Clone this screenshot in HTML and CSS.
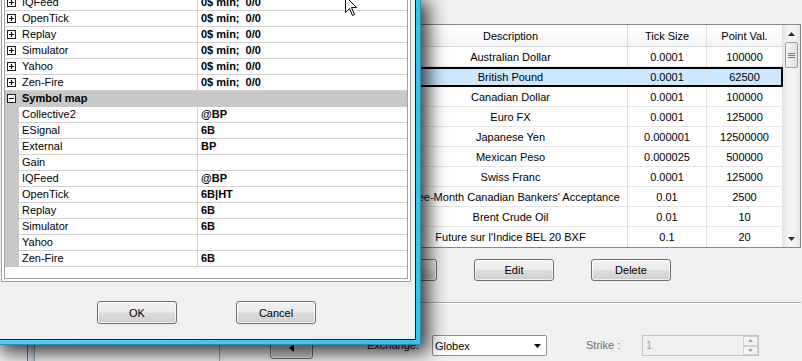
FILE: index.html
```html
<!DOCTYPE html>
<html>
<head>
<meta charset="utf-8">
<link rel="stylesheet" href="styles.css">
</head>
<body>
<div class="app">
  <div class="side"><div class="side-bar"></div></div>
  <div class="content">
    <div class="list">
      <div class="lv">
        <div class="lv-head">
          <div class="c-desc">Description</div>
          <div class="c-tick">Tick Size</div>
          <div class="c-pt">Point Val.</div>
        </div>
        <div class="lv-row"><div class="c-desc">Australian Dollar</div><div class="c-tick">0.0001</div><div class="c-pt">100000</div></div>
        <div class="lv-row sel"><div class="c-desc">British Pound</div><div class="c-tick">0.0001</div><div class="c-pt">62500</div></div>
        <div class="lv-row"><div class="c-desc">Canadian Dollar</div><div class="c-tick">0.0001</div><div class="c-pt">100000</div></div>
        <div class="lv-row"><div class="c-desc">Euro FX</div><div class="c-tick">0.0001</div><div class="c-pt">125000</div></div>
        <div class="lv-row"><div class="c-desc">Japanese Yen</div><div class="c-tick">0.000001</div><div class="c-pt">12500000</div></div>
        <div class="lv-row"><div class="c-desc">Mexican Peso</div><div class="c-tick">0.000025</div><div class="c-pt">500000</div></div>
        <div class="lv-row"><div class="c-desc">Swiss Franc</div><div class="c-tick">0.0001</div><div class="c-pt">125000</div></div>
        <div class="lv-row"><div class="c-desc">Three-Month Canadian Bankers' Acceptance</div><div class="c-tick">0.01</div><div class="c-pt">2500</div></div>
        <div class="lv-row"><div class="c-desc">Brent Crude Oil</div><div class="c-tick">0.01</div><div class="c-pt">10</div></div>
        <div class="lv-row last"><div class="c-desc">Future sur l'Indice BEL 20 BXF</div><div class="c-tick">0.1</div><div class="c-pt">20</div></div>
      </div>
      <div class="sb">
        <div class="sb-btn"><svg width="7" height="4" viewBox="0 0 7 4"><path d="M0 4 L3.5 0 L7 4 Z" fill="#303030"/></svg></div>
        <div class="sb-thumb"><span></span><span></span><span></span></div>
        <div class="sb-track"></div>
        <div class="sb-btn"><svg width="7" height="4" viewBox="0 0 7 4"><path d="M0 0 L3.5 4 L7 0 Z" fill="#303030"/></svg></div>
      </div>
    </div>
    <div class="btn-row">
      <div class="btn">Add</div>
      <div class="btn">Edit</div>
      <div class="btn">Delete</div>
    </div>
    <div class="sep"></div>
    <div class="bottom-row">
      <div class="btn nav-btn"><svg width="5" height="8" viewBox="0 0 5 8"><path d="M5 0 L0 4 L5 8 Z" fill="#000"/></svg></div>
      <div class="ex-label">Exchange:</div>
      <div class="combo"><span>Globex</span><svg class="combo-arrow" width="7" height="4" viewBox="0 0 7 4"><path d="M0 0 L3.5 4 L7 0 Z" fill="#000"/></svg></div>
      <div class="strike">Strike :</div>
      <div class="spin"><span>1</span>
        <div class="spin-btns">
          <div class="spin-b"><svg width="5" height="3" viewBox="0 0 5 3"><path d="M0 3 L2.5 0 L5 3 Z" fill="#a0a0a0"/></svg></div>
          <div class="spin-b"><svg width="5" height="3" viewBox="0 0 5 3"><path d="M0 0 L2.5 3 L5 0 Z" fill="#a0a0a0"/></svg></div>
        </div>
      </div>
    </div>
  </div>
</div>

<div class="dialog">
  <div class="client">
    <div class="pg-outer">
      <div class="pg-inner">
        <div class="pg-row exp"><span class="pg-gut"><svg width="9" height="9" viewBox="0 0 9 9"><rect x="0.5" y="0.5" width="8" height="8" fill="#fff" stroke="#222"/><path d="M2 4.5 H7 M4.5 2 V7" stroke="#000"/></svg></span><span class="pg-name">IQFeed</span><span class="pg-val">0$ min;&nbsp; 0/0</span></div>
        <div class="pg-row exp"><span class="pg-gut"><svg width="9" height="9" viewBox="0 0 9 9"><rect x="0.5" y="0.5" width="8" height="8" fill="#fff" stroke="#222"/><path d="M2 4.5 H7 M4.5 2 V7" stroke="#000"/></svg></span><span class="pg-name">OpenTick</span><span class="pg-val">0$ min;&nbsp; 0/0</span></div>
        <div class="pg-row exp"><span class="pg-gut"><svg width="9" height="9" viewBox="0 0 9 9"><rect x="0.5" y="0.5" width="8" height="8" fill="#fff" stroke="#222"/><path d="M2 4.5 H7 M4.5 2 V7" stroke="#000"/></svg></span><span class="pg-name">Replay</span><span class="pg-val">0$ min;&nbsp; 0/0</span></div>
        <div class="pg-row exp"><span class="pg-gut"><svg width="9" height="9" viewBox="0 0 9 9"><rect x="0.5" y="0.5" width="8" height="8" fill="#fff" stroke="#222"/><path d="M2 4.5 H7 M4.5 2 V7" stroke="#000"/></svg></span><span class="pg-name">Simulator</span><span class="pg-val">0$ min;&nbsp; 0/0</span></div>
        <div class="pg-row exp"><span class="pg-gut"><svg width="9" height="9" viewBox="0 0 9 9"><rect x="0.5" y="0.5" width="8" height="8" fill="#fff" stroke="#222"/><path d="M2 4.5 H7 M4.5 2 V7" stroke="#000"/></svg></span><span class="pg-name">Yahoo</span><span class="pg-val">0$ min;&nbsp; 0/0</span></div>
        <div class="pg-row exp"><span class="pg-gut"><svg width="9" height="9" viewBox="0 0 9 9"><rect x="0.5" y="0.5" width="8" height="8" fill="#fff" stroke="#222"/><path d="M2 4.5 H7 M4.5 2 V7" stroke="#000"/></svg></span><span class="pg-name">Zen-Fire</span><span class="pg-val">0$ min;&nbsp; 0/0</span></div>
        <div class="pg-cat"><span class="pg-gut"><svg width="9" height="9" viewBox="0 0 9 9"><rect x="0.5" y="0.5" width="8" height="8" fill="#fff" stroke="#222"/><path d="M2 4.5 H7" stroke="#000"/></svg></span><span class="pg-cat-name">Symbol map</span></div>
        <div class="pg-row sub"><span class="pg-gut"></span><span class="pg-name">Collective2</span><span class="pg-val">@BP</span></div>
        <div class="pg-row sub"><span class="pg-gut"></span><span class="pg-name">ESignal</span><span class="pg-val">6B</span></div>
        <div class="pg-row sub"><span class="pg-gut"></span><span class="pg-name">External</span><span class="pg-val">BP</span></div>
        <div class="pg-row sub"><span class="pg-gut"></span><span class="pg-name">Gain</span><span class="pg-val"></span></div>
        <div class="pg-row sub"><span class="pg-gut"></span><span class="pg-name">IQFeed</span><span class="pg-val">@BP</span></div>
        <div class="pg-row sub"><span class="pg-gut"></span><span class="pg-name">OpenTick</span><span class="pg-val">6B|HT</span></div>
        <div class="pg-row sub"><span class="pg-gut"></span><span class="pg-name">Replay</span><span class="pg-val">6B</span></div>
        <div class="pg-row sub"><span class="pg-gut"></span><span class="pg-name">Simulator</span><span class="pg-val">6B</span></div>
        <div class="pg-row sub"><span class="pg-gut"></span><span class="pg-name">Yahoo</span><span class="pg-val"></span></div>
        <div class="pg-row sub"><span class="pg-gut"></span><span class="pg-name">Zen-Fire</span><span class="pg-val">6B</span></div>
      </div>
    </div>
    <div class="dlg-buttons">
      <div class="btn dlg-btn">OK</div>
      <div class="btn dlg-btn">Cancel</div>
    </div>
  </div>
</div>

<svg class="cursor" width="13" height="21" viewBox="0 0 13 21"><path d="M0.5 0.5 V16.5 L4.5 12.5 L7.5 19.5 L9.5 18.5 L6.5 11.5 H11.5 Z" fill="#fff" stroke="#000" stroke-linejoin="miter"/></svg>
</body>
</html>
```

FILE: styles.css
```css
* { box-sizing: border-box; }
html, body { margin: 0; padding: 0; }
body {
  width: 802px;
  height: 361px;
  overflow: hidden;
  position: relative;
  background: #f0f0f0;
  font-family: "Liberation Sans", Arial, sans-serif;
  font-size: 11px;
  color: #000;
}

/* ---------- background application window ---------- */
.app { display: flex; width: 802px; height: 361px; }
.side {
  width: 220px;
  flex: none;
  border-right: 1px solid #a0a0a0;
  padding-left: 27px;
  display: flex;
}
.side-bar {
  width: 8px;
  border-left: 1px solid #6d7b8c;
  border-right: 1px solid #9aa4b0;
  background: linear-gradient(to right, #e8eff7, #c3d1e1);
}
.content {
  flex: 1;
  padding-top: 24px;
  display: flex;
  flex-direction: column;
}

.list {
  margin-left: 173px;
  width: 408px;
  height: 224px;
  border: 1px solid #828790;
  background: #fff;
  display: flex;
}
.lv { width: 389px; }
.lv-head, .lv-row { display: flex; }
.lv-head {
  height: 22px;
  border-bottom: 1px solid #d5d5d5;
  background: linear-gradient(#ffffff, #f4f5f7);
}
.lv-head > div {
  line-height: 22px;
  text-align: center;
  border-right: 1px solid #dcdcdc;
}
.lv-row { height: 20px; border-bottom: 1px solid #e6e6e6; }
.lv-row.last { border-bottom: 0; }
.lv-row > div {
  line-height: 20px;
  text-align: center;
  white-space: nowrap;
  overflow: hidden;
  border-right: 1px solid #e0e0e0;
}
.c-desc { width: 234px; }
.c-tick { width: 79px; }
.c-pt { width: 76px; }
.lv-row.sel {
  background: #cce8ff;
  outline: 2px solid #000;
  outline-offset: -2px;
}

.sb {
  width: 17px;
  display: flex;
  flex-direction: column;
  background: linear-gradient(to right, #e6e6e6, #f3f3f3 30%, #f3f3f3 70%, #e6e6e6);
}
.sb-btn {
  height: 17px;
  display: flex;
  align-items: center;
  justify-content: center;
}
.sb-thumb {
  margin: 0 2px;
  height: 26px;
  border: 1px solid #9b9b9b;
  border-radius: 2px;
  background: linear-gradient(to right, #f4f4f4, #e2e2e2);
  display: flex;
  flex-direction: column;
  align-items: center;
  justify-content: center;
  gap: 1px;
}
.sb-thumb span { width: 7px; height: 1px; background: #7a7a7a; }
.sb-track { flex: 1; }

.btn {
  border: 1px solid #707070;
  border-radius: 3px;
  background: linear-gradient(#f2f2f2 0%, #ebebeb 48%, #dddddd 52%, #cfcfcf 100%);
  box-shadow: inset 0 0 0 1px rgba(255,255,255,0.7);
  display: flex;
  align-items: center;
  justify-content: center;
}
.btn-row {
  display: flex;
  gap: 37px;
  margin: 11px 0 0 137px;
}
.btn-row .btn { width: 80px; height: 22px; }

.sep {
  height: 2px;
  margin: 21px 1px 0 10px;
  border-top: 1px solid #a8a8a8;
  border-bottom: 1px solid #ffffff;
}

.bottom-row {
  display: flex;
  align-items: flex-start;
  margin-top: 31px;
}
.nav-btn { margin: 1px 0 0 50px; width: 43px; height: 23px; }
.ex-label {
  width: 108px;
  line-height: 20px;
  text-align: right;
  padding-right: 2px;
}
.combo {
  margin-left: 11px;
  width: 115px;
  height: 21px;
  border: 1px solid #8e8f8f;
  border-radius: 2px;
  background: #fff;
  display: flex;
  align-items: center;
  justify-content: space-between;
  padding: 0 5px 0 2px;
}
.strike {
  margin-left: 39px;
  width: 56px;
  line-height: 21px;
  color: #6d6d6d;
}
.spin {
  width: 117px;
  height: 21px;
  border: 1px solid #c2c2c2;
  background: #f0f0f0;
  color: #a0a0a0;
  display: flex;
  justify-content: space-between;
  padding-left: 3px;
  line-height: 19px;
}
.spin-btns { width: 15px; display: flex; flex-direction: column; }
.spin-b {
  flex: 1;
  border: 1px solid #d0d0d0;
  background: #f4f4f4;
  display: flex;
  align-items: center;
  justify-content: center;
}

/* ---------- dialog window ---------- */
.dialog {
  position: absolute;
  left: 0;
  top: 0;
  width: 421px;
  height: 345px;
  padding: 0 5px 5px 0;
  background: linear-gradient(to right, #52d0f4, #38c2ec);
  box-shadow: inset -1px -1px 0 #2a8fb4, 4px 4px 18px 3px rgba(0,0,0,0.8);
}
.client {
  width: 416px;
  height: 340px;
  background: #f0f0f0;
  border-right: 1px solid #1a1a1a;
  border-bottom: 1px solid #1a1a1a;
  overflow: hidden;
  display: flex;
  flex-direction: column;
}
.pg-outer {
  margin: -9px 0 0 1px;
  width: 410px;
  border: 1px solid #a0a0a0;
  padding: 2px;
  background: #fff;
}
.pg-inner {
  height: 285px;
  border: 1px solid #a0a0a0;
}
.pg-row, .pg-cat { display: flex; height: 16px; }
.pg-gut { width: 14px; flex: none; }
.pg-gut svg { display: block; margin: 3px 0 0 2px; }
.pg-name, .pg-val {
  line-height: 15px;
  height: 16px;
  padding-left: 3px;
  border-bottom: 1px solid #d0d0d0;
  white-space: nowrap;
}
.pg-name { width: 179px; border-right: 1px solid #d0d0d0; }
.pg-val { flex: 1; font-weight: bold; }
.pg-row.exp .pg-gut { border-bottom: 1px solid #d0d0d0; }
.pg-row.sub .pg-gut { background: #c8c8c8; }
.pg-cat { background: #c8c8c8; }
.pg-cat-name { font-weight: bold; line-height: 15px; padding-left: 3px; }

.dlg-buttons {
  display: flex;
  justify-content: center;
  gap: 59px;
  margin-top: 19px;
  padding-right: 2px;
}
.dlg-btn { width: 80px; height: 23px; }

.cursor { position: absolute; left: 345px; top: -4px; }
```
